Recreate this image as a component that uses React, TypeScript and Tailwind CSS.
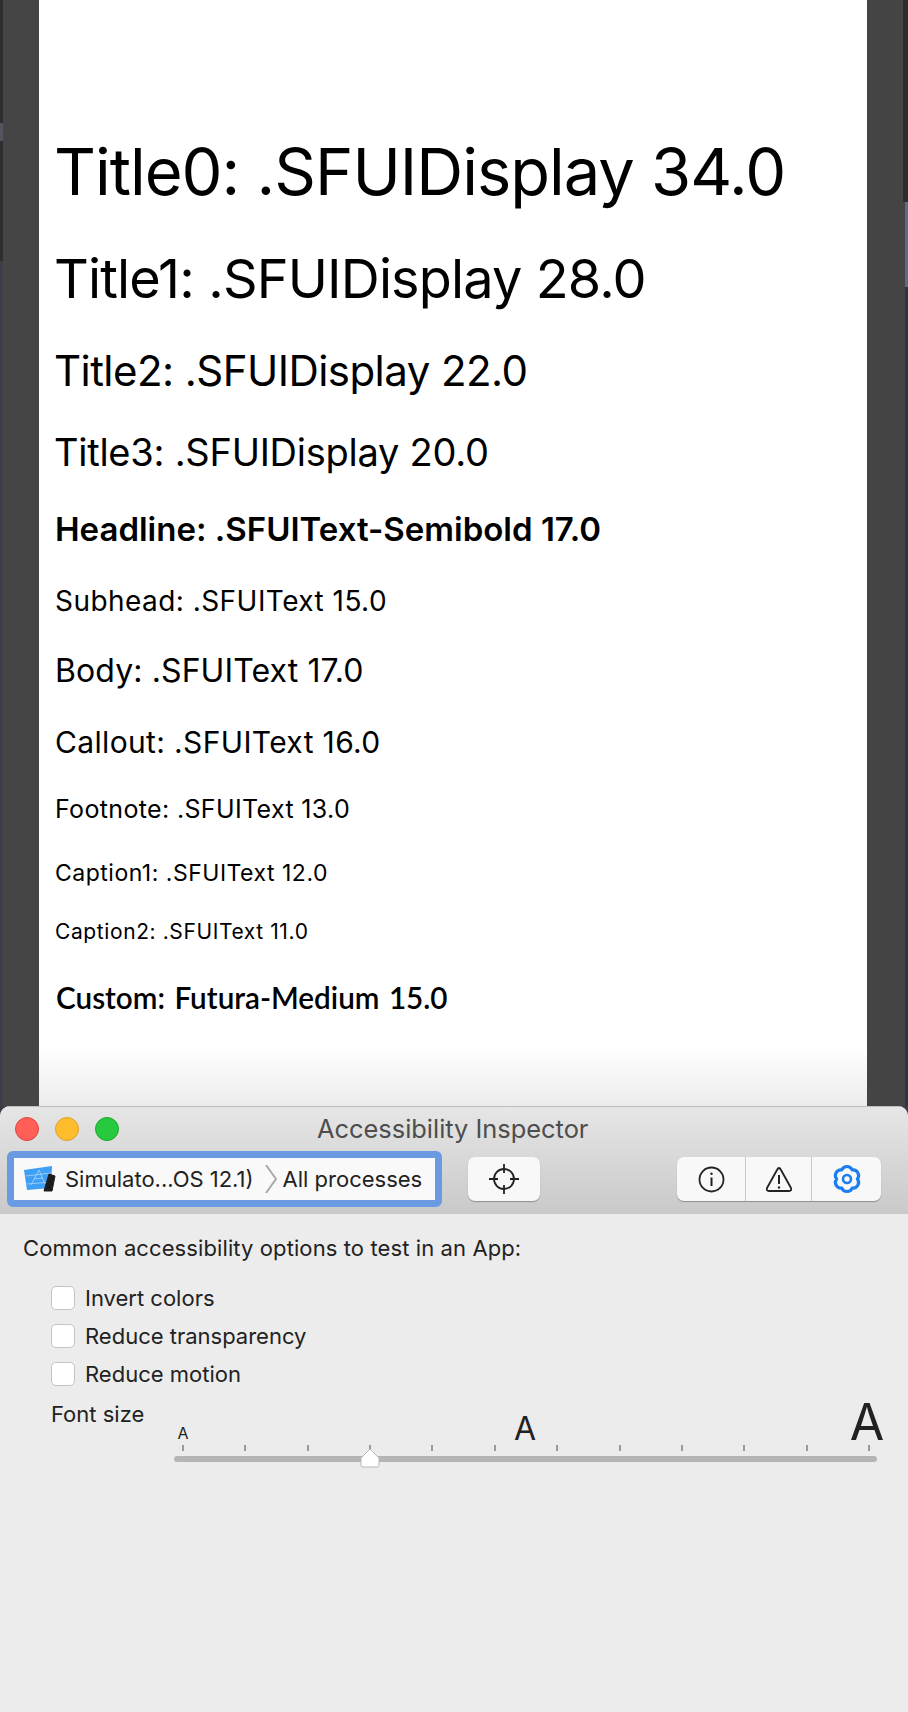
const rows = [
  { text: "Title0: .SFUIDisplay 34.0", cls: "h-[106px] text-[65px] tracking-[-1px]" },
  { text: "Title1: .SFUIDisplay 28.0", cls: "h-[106px] text-[54px] tracking-[-0.85px]" },
  { text: "Title2: .SFUIDisplay 22.0", cls: "h-[78px] text-[42px] tracking-[-0.55px]" },
  { text: "Title3: .SFUIDisplay 20.0", cls: "h-[87px] text-[38px] tracking-[-0.25px]" },
  { text: "Headline: .SFUIText-Semibold 17.0", cls: "h-[68px] pl-[1px] text-[33px] font-semibold" },
  { text: "Subhead: .SFUIText 15.0", cls: "h-[74px] pl-[1px] text-[28px] tracking-[0.45px]" },
  { text: "Body: .SFUIText 17.0", cls: "h-[66px] pl-[1px] text-[32px] tracking-[0.1px]" },
  { text: "Callout: .SFUIText 16.0", cls: "h-[76px] pl-[1px] text-[30px] tracking-[0.35px]" },
  { text: "Footnote: .SFUIText 13.0", cls: "h-[59px] pl-[1px] text-[25px] tracking-[0.35px]" },
  { text: "Caption1: .SFUIText 12.0", cls: "h-[68px] pl-[1px] text-[23px] tracking-[0.5px]" },
  { text: "Caption2: .SFUIText 11.0", cls: "h-[50px] pl-[1px] text-[21px] tracking-[0.6px]" },
];

const ticks = [0, 1, 2, 3, 4, 5, 6, 7, 8, 9, 10, 11];

function Checkbox({ label }: { label: string }) {
  return (
    <div className="flex h-[38px] items-center">
      <div className="h-[24px] w-[24px] rounded-[5px] border border-[#c4c4c4] bg-white" />
      <span className="ml-[10px] text-[22px] text-[#222]">{label}</span>
    </div>
  );
}

function SimulatorIcon() {
  return (
    <svg width="32" height="30" viewBox="0 0 32 30">
      <path d="M0 6 L28 2 L27 24 L3 26 Z" fill="#3f9ff5" />
      <path d="M7 21 L15 6 L21 20 M10 15 L19 14 M2 12 L27 9 M3 20 L27 18" stroke="#a8d6fb" strokeWidth="0.8" fill="none" />
      <path d="M25 10 L31 12 L28 27 L20 27 Z" fill="#1c1c1e" stroke="#1c1c1e" strokeLinejoin="round" />
    </svg>
  );
}

function Crosshair() {
  return (
    <svg width="30" height="30" viewBox="0 0 30 30" fill="none" stroke="#222" strokeWidth="1.8">
      <circle cx="15" cy="15" r="10" />
      <path d="M15 0 V9 M15 21 V30 M0 15 H9 M21 15 H30" />
    </svg>
  );
}

function InfoIcon() {
  return (
    <svg width="27" height="27" viewBox="0 0 27 27" fill="none" stroke="#222" strokeWidth="1.8">
      <circle cx="13.5" cy="13.5" r="12" />
      <path d="M13.5 11.5 V20" strokeWidth="2" />
      <circle cx="13.5" cy="7.8" r="1.2" fill="#222" stroke="none" />
    </svg>
  );
}

function WarningIcon() {
  return (
    <svg width="28" height="27" viewBox="0 0 28 27" fill="none" stroke="#222" strokeWidth="1.8" strokeLinejoin="round">
      <path d="M14 2 Q15 2 16 4 L26 22 Q27 25 24 25 H4 Q1 25 2 22 L12 4 Q13 2 14 2 Z" />
      <path d="M14 9 V18" strokeWidth="2" />
      <circle cx="14" cy="21.5" r="1.2" fill="#222" stroke="none" />
    </svg>
  );
}

function GearIcon() {
  return (
    <svg width="30" height="30" viewBox="0 0 30 30" fill="none" stroke="#1a7ef2" strokeWidth="3.2" strokeLinejoin="round">
      <path d="M9.8 6 A5.6 5.6 0 0 1 20.2 6 A5.6 5.6 0 0 1 25.4 15 A5.6 5.6 0 0 1 20.2 24 A5.6 5.6 0 0 1 9.8 24 A5.6 5.6 0 0 1 4.6 15 A5.6 5.6 0 0 1 9.8 6 Z" />
      <circle cx="15" cy="15" r="4" strokeWidth="2.6" />
    </svg>
  );
}

export default function App() {
  return (
    <div className="h-[1712px] w-[908px] overflow-hidden bg-[#3d3d43] font-['Inter',sans-serif]">
      <div className="flex h-[1106px]">
        <div className="flex w-[39px] bg-[#454545]">
          <div className="flex w-[3px] flex-col">
            <div className="h-[123px] bg-[#2e2e2e]" />
            <div className="h-[18px] bg-[#555560]" />
            <div className="h-[120px] bg-[#2e2e2e]" />
            <div className="flex-1 bg-[#3d3d45]" />
          </div>
        </div>

        <div className="relative flex-1 bg-white pl-[15px] pt-[119px] text-black">
          {rows.map((row) => (
            <div key={row.text} className={`flex items-center whitespace-nowrap ${row.cls}`}>
              {row.text}
            </div>
          ))}
          <div className="flex h-[82px] items-center whitespace-nowrap pl-[2px] font-['Lato',sans-serif] text-[29.7px] font-semibold [word-spacing:2px]">
            Custom: Futura-Medium 15.0
          </div>
          <div className="absolute bottom-0 left-0 right-0 h-[60px] bg-gradient-to-b from-white to-[#ececec]" />
        </div>

        <div className="flex w-[41px] justify-end bg-[#444444]">
          <div className="flex w-[5px] flex-col">
            <div className="h-[202px] bg-[#2c2c2c]" />
            <div className="h-[85px] border-l-2 border-[#444444] bg-[#5e6a85]" />
            <div className="flex-1 border-l-2 border-[#444444] bg-[#2f3442]" />
          </div>
        </div>
      </div>

      <div className="h-[606px] overflow-hidden rounded-t-[10px] bg-[#ececec]">
        <div className="relative h-[108px] border-t border-[#bdbdbd] bg-gradient-to-b from-[#e6e6e6] to-[#c9c9c9]">
          <div className="flex h-[43px] items-center">
            <div className="ml-[15px] h-[24px] w-[24px] rounded-full border border-[#e0443e] bg-[#ff5f57]" />
            <div className="ml-[16px] h-[24px] w-[24px] rounded-full border border-[#dea123] bg-[#ffbd2e]" />
            <div className="ml-[16px] h-[24px] w-[24px] rounded-full border border-[#1aab29] bg-[#27c93f]" />
            <div className="ml-[198px] pt-[2px] text-[25.4px] text-[#4d4d4d]">Accessibility Inspector</div>
          </div>

          <div className="mt-[1px] flex items-center">
            <div className="ml-[7px] flex h-[56px] w-[435px] items-center rounded-[6px] border-[7px] border-[#6a9ae2] bg-[#f9f9f9] pl-[10px] text-[22px] text-[#222]">
              <SimulatorIcon />
              <span className="ml-[9px] whitespace-nowrap">Simulato...OS 12.1)</span>
              <svg className="ml-[11px]" width="12" height="28" viewBox="0 0 12 28" fill="none" stroke="#a9a9a9" strokeWidth="2">
                <path d="M1 0 L11 14 L1 28" />
              </svg>
              <span className="ml-[6px] whitespace-nowrap">All processes</span>
            </div>

            <div className="ml-[26px] flex h-[44px] w-[72px] items-center justify-center rounded-[7px] bg-[#f8f8f8] shadow-[0_1px_1px_rgba(0,0,0,0.3)]">
              <Crosshair />
            </div>

            <div className="ml-[137px] flex h-[44px] w-[204px] rounded-[7px] bg-[#f8f8f8] shadow-[0_1px_1px_rgba(0,0,0,0.3)]">
              <div className="flex w-[69px] items-center justify-center border-r border-[#c8c8c8]">
                <InfoIcon />
              </div>
              <div className="flex w-[66px] items-center justify-center border-r border-[#c8c8c8]">
                <WarningIcon />
              </div>
              <div className="flex flex-1 items-center justify-center">
                <GearIcon />
              </div>
            </div>
          </div>
        </div>

        <div className="pl-[23px] pt-[20px] text-[#222]">
          <div className="whitespace-nowrap text-[22px] tracking-[0.1px] leading-[28px]">Common accessibility options to test in an App:</div>
          <div className="ml-[28px] mt-[17px]">
            <Checkbox label="Invert colors" />
            <Checkbox label="Reduce transparency" />
            <Checkbox label="Reduce motion" />
          </div>
          <div className="ml-[28px] flex">
            <div className="mt-[9px] w-[123px] text-[22px] leading-[24px]">Font size</div>
            <div className="relative w-[703px]">
              <div className="flex h-[47px] items-end justify-between pl-[9px] pr-[10px]">
                <div className="flex w-0 justify-center text-[16px] leading-[14px]">A</div>
                <div className="flex w-0 justify-center text-[32px] leading-[22px]">A</div>
                <div className="flex w-0 justify-center text-[50px] leading-[36px]">A</div>
              </div>
              <div className="mt-[5px] flex justify-between pl-[8px] pr-[7px]">
                {ticks.map((t) => (
                  <div key={t} className="h-[6px] w-[2px] bg-[#9a9a9a]" />
                ))}
              </div>
              <div className="mt-[5px] h-[6px] rounded-full bg-[#b5b5b5]" />
              <svg className="absolute left-[186px] top-[55px]" width="20" height="20" viewBox="0 0 20 20">
                <path d="M10 1 L19 10 V17 Q19 19 17 19 H3 Q1 19 1 17 V10 Z" fill="#fff" stroke="#b8b8b8" strokeWidth="1" />
              </svg>
            </div>
          </div>
        </div>
      </div>
    </div>
  );
}
